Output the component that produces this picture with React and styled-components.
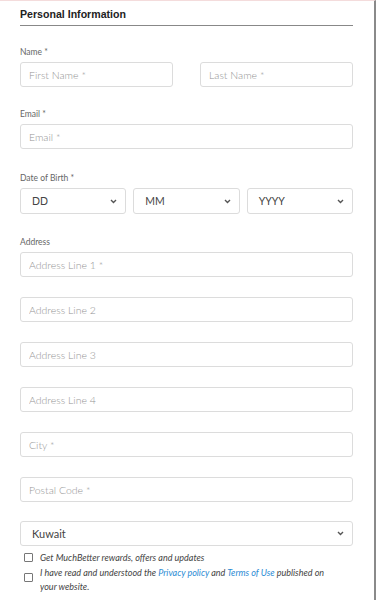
import React from "react";
import styled, { createGlobalStyle } from "styled-components";

const GlobalStyle = createGlobalStyle`
    html, body {
        margin: 0;
        padding: 0;
        background: #fff;
    }
    body {
        font-family: Lato, "Open Sans", sans-serif;
    }
`;

const Page = styled.div`
    width: 376px;
    height: 600px;
    box-sizing: border-box;
    border-top: 1px solid #f4dcdc;
    border-right: 2px solid #8a8a8a;
    padding: 0 21px 0 20px;
    overflow: hidden;
`;

const Heading = styled.h2`
    margin: 0;
    padding-top: 6px;
    height: 18px;
    font-family: "Liberation Sans", Arial, sans-serif;
    font-weight: 700;
    font-size: 10.6px;
    line-height: 15px;
    color: #222;
    border-bottom: 1px solid #888;
`;

const Field = styled.div`
    margin-top: ${(p) => p.$top || 23}px;
`;

const Label = styled.div`
    font-size: 8.5px;
    line-height: 10px;
    color: #666;
    margin-bottom: 5px;
`;

const Row = styled.div`
    display: grid;
    grid-template-columns: ${(p) => p.$cols};
    column-gap: ${(p) => p.$gap}px;
`;

const Input = styled.input`
    display: block;
    width: 100%;
    box-sizing: border-box;
    height: 25px;
    border: 1px solid #dcdcdc;
    border-radius: 3px;
    padding: 0 8px;
    font-family: Lato, sans-serif;
    font-size: 10.5px;
    font-weight: 300;
    color: #333;
    background: #fff;
    outline: none;
    margin-top: ${(p) => p.$top || 0}px;
    &::placeholder {
        color: #949494;
    }
`;

const SelectBox = styled.div`
    height: ${(p) => p.$h || 25}px;
    box-sizing: border-box;
    border: 1px solid #dcdcdc;
    border-radius: 3px;
    display: flex;
    align-items: center;
    justify-content: space-between;
    padding: 0 8px 0 11px;
    margin-top: ${(p) => p.$top || 0}px;
    font-size: ${(p) => p.$size || 11}px;
    color: #444;
`;

const Chevron = () => (
    <svg width="7" height="5" viewBox="0 0 7 5">
        <path d="M1 1 L3.5 3.5 L6 1" fill="none" stroke="#555" strokeWidth="1.4" />
    </svg>
);

const Select = ({ value, h, size, top }) => (
    <SelectBox $h={h} $size={size} $top={top}>
        <span>{value}</span>
        <Chevron />
    </SelectBox>
);

const Checks = styled.div`
    margin-top: 5px;
    display: flex;
    flex-direction: column;
    gap: 2px;
`;

const CheckRow = styled.label`
    display: flex;
    align-items: flex-start;
    gap: 7px;
    padding-left: 4px;
    font-size: 9px;
    font-style: italic;
    line-height: ${(p) => p.$lh || 14}px;
    color: #444;
`;

const CheckText = styled.span`
    max-width: 292px;
`;

const Box = styled.span`
    flex: none;
    width: 7px;
    height: 7px;
    border: 1px solid #777;
    border-radius: 1px;
    margin-top: ${(p) => p.$top || 0}px;
`;

const Link = styled.a`
    color: #2b8bd4;
    text-decoration: none;
`;

export default function App() {
    const address = ["Address Line 1 *", "Address Line 2", "Address Line 3", "Address Line 4", "City *", "Postal Code *"];
    return (
        <>
            <GlobalStyle />
            <Page>
                <Heading>Personal Information</Heading>
                <Field $top={21}>
                    <Label>Name *</Label>
                    <Row $cols="1fr 1fr" $gap={27}>
                        <Input placeholder="First Name *" />
                        <Input placeholder="Last Name *" />
                    </Row>
                </Field>
                <Field $top={22}>
                    <Label>Email *</Label>
                    <Input placeholder="Email *" />
                </Field>
                <Field $top={24}>
                    <Label>Date of Birth *</Label>
                    <Row $cols="1fr 1fr 1fr" $gap={7}>
                        <Select value="DD" h={26} size={10.5} />
                        <Select value="MM" h={26} size={10.5} />
                        <Select value="YYYY" h={26} size={10.5} />
                    </Row>
                </Field>
                <Field $top={23}>
                    <Label>Address</Label>
                    {address.map((a, i) => (
                        <Input key={a} placeholder={a} $top={i === 0 ? 0 : 20} />
                    ))}
                    <Select value="Kuwait" top={19} />
                </Field>
                <Checks>
                    <CheckRow $lh={13}>
                        <Box $top={2} />
                        <CheckText>Get MuchBetter rewards, offers and updates</CheckText>
                    </CheckRow>
                    <CheckRow>
                        <Box $top={7} />
                        <CheckText>
                            I have read and understood the <Link>Privacy policy</Link> and <Link>Terms of Use</Link> published on your website.
                        </CheckText>
                    </CheckRow>
                </Checks>
            </Page>
        </>
    );
}
